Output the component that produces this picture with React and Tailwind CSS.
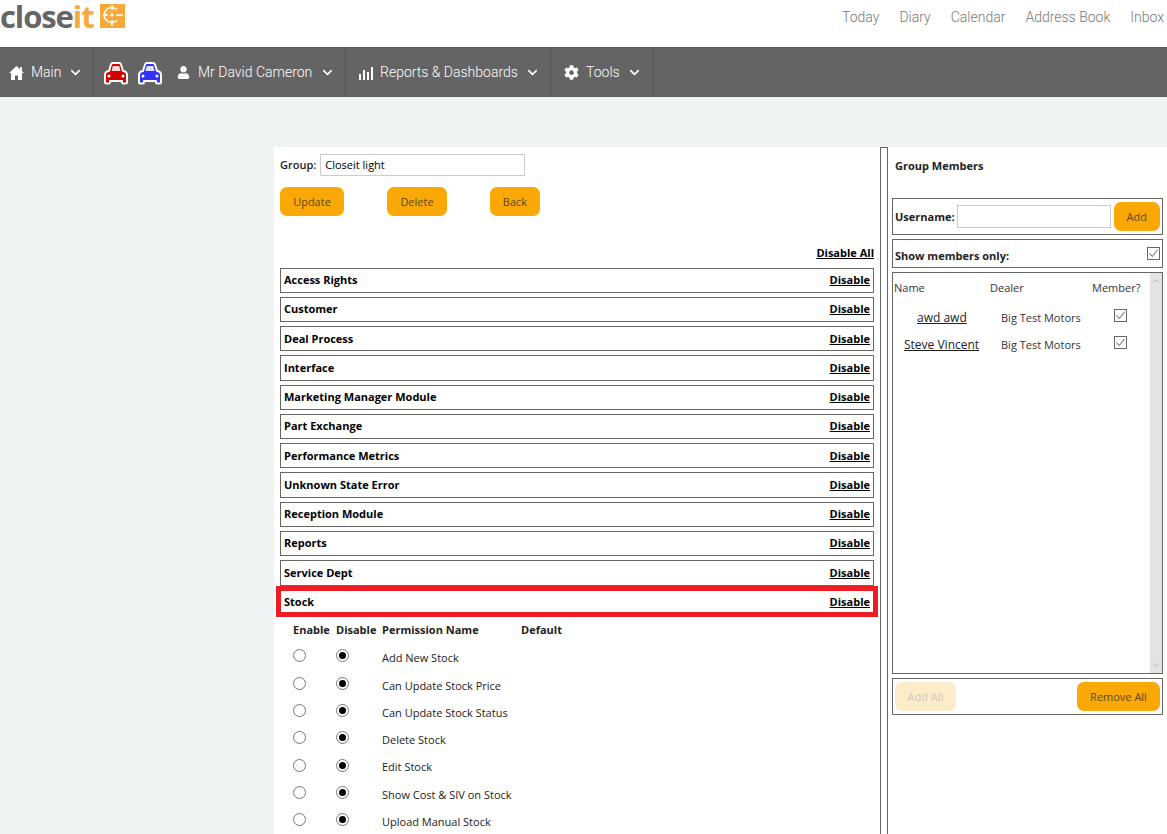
import { ChevronDown, ChevronUp } from "lucide-react";
import { FaUser, FaCog } from "react-icons/fa";

const topLinks = ["Today", "Diary", "Calendar", "Address Book", "Inbox"];
const sections = [
  "Access Rights",
  "Customer",
  "Deal Process",
  "Interface",
  "Marketing Manager Module",
  "Part Exchange",
  "Performance Metrics",
  "Unknown State Error",
  "Reception Module",
  "Reports",
  "Service Dept",
];
const permissions = [
  "Add New Stock",
  "Can Update Stock Price",
  "Can Update Stock Status",
  "Delete Stock",
  "Edit Stock",
  "Show Cost & SIV on Stock",
  "Upload Manual Stock",
];
const members = [
  { name: "awd awd", pad: "pl-[24px] w-[108px]" },
  { name: "Steve Vincent", pad: "pl-[11px] w-[108px]" },
];

function Car({ color }) {
  return (
    <svg width="26" height="24" viewBox="0 0 26 24" aria-hidden="true">
      <path
        d="M6 10 L8 3.5 Q8.5 2 10 2 H16 Q17.500 2 18 3.500 L20 10 Q24 10.500 24 14 V21 Q24 22.500 22.500 22.500 H20.500 Q19 22.500 19 21 V20 H7 V21 Q7 22.500 5.500 22.500 H3.500 Q2 22.500 2 21 V14 Q2 10.500 6 10 Z"
        fill={color}
        stroke="#fff"
        strokeWidth="2"
        strokeLinejoin="round"
      />
      <path d="M8.500 10 L9.800 5 H16.200 L17.500 10 Z" fill="#fff" opacity="0.85" />
      <circle cx="6" cy="15" r="1.500" fill="#fff" />
      <circle cx="20" cy="15" r="1.500" fill="#fff" />
    </svg>
  );
}

function HomeIcon() {
  return (
    <svg width="15" height="14" viewBox="0 0 15 14" fill="#fff" aria-hidden="true">
      <path d="M7.500 0 L15 7 H13 V14 H9 V9.500 H6 V14 H2 V7 H0 Z" />
      <rect x="11" y="1" width="2" height="4" />
    </svg>
  );
}

function BarsIcon() {
  return (
    <svg width="14" height="14" viewBox="0 0 14 14" fill="#fff" aria-hidden="true">
      <rect x="0" y="8" width="2" height="6" />
      <rect x="4" y="4" width="2" height="10" />
      <rect x="8" y="6" width="2" height="8" />
      <rect x="12" y="1" width="2" height="13" />
    </svg>
  );
}

function NavLabel({ icon, label, gap = "gap-[7px]" }) {
  return (
    <span className={`flex items-center whitespace-nowrap ${gap}`}>
      {icon}
      <span>{label}</span>
      <ChevronDown size={15} strokeWidth={2.5} className="text-white" />
    </span>
  );
}

function Button({ children, className = "" }) {
  return (
    <button
      type="button"
      className={`h-[29px] rounded-[7px] bg-[#f9a806] pt-px text-[11px] text-[#5b4a1c] ${className}`}
    >
      {children}
    </button>
  );
}

function Radio({ checked }) {
  return (
    <span className="flex size-[13px] items-center justify-center rounded-full border border-[#767676] bg-white">
      {checked && <span className="size-[7px] rounded-full bg-black" />}
    </span>
  );
}

function Tick() {
  return (
    <span className="flex size-[13px] items-center justify-center border border-[#666] bg-white">
      <svg width="11" height="11" viewBox="0 0 11 11" fill="none" stroke="#444" strokeWidth="0.9" aria-hidden="true">
        <path d="M1.500 5.500 L4.300 8.500 L9.500 1.800" />
      </svg>
    </span>
  );
}

function SectionRow({ title, className = "border border-[#666] h-[25.27px] mb-1 px-[3px]" }) {
  return (
    <div className={`flex items-center justify-between text-[11px] font-bold text-black ${className}`}>
      <span>{title}</span>
      <a className="underline">Disable</a>
    </div>
  );
}

export default function App() {
  return (
    <div className="flex h-[834px] flex-col overflow-hidden bg-[#eff3f4] font-['Open_Sans',sans-serif]">
      <header className="flex h-[47px] shrink-0 items-start justify-between bg-white">
        <div className="flex items-start">
          <span className="text-[31px] font-bold leading-[33px] tracking-[-1.1px] text-[#666]">
            close<span className="text-[#f9a83a]">it</span>
          </span>
          <span className="ml-[6px] mt-[4px] flex h-[24px] w-[25px] items-center justify-center bg-[#f9a83a]">
            <svg width="25" height="24" viewBox="0 0 25 24" fill="none" stroke="#fff" strokeWidth="1.500" aria-hidden="true">
              <path d="M17 5.800 A7.500 7.500 0 1 0 17 16.200" />
              <circle cx="12" cy="11" r="1.700" fill="#fff" stroke="none" />
              <path d="M12 1 V6 M12 16 V22 M3 11 H8 M16 11 H23" />
            </svg>
          </span>
        </div>
        <nav className="flex gap-[20px] pr-[3px] pt-[7px] font-['Roboto',sans-serif] text-[14px] font-light text-[#777]">
          {topLinks.map((link) => (
            <a key={link}>{link}</a>
          ))}
        </nav>
      </header>

      <nav className="flex h-[50px] shrink-0 items-stretch border-t border-[#5c5c5c] bg-[#646464] font-['Roboto',sans-serif] text-[14px] font-light text-white">
        <div className="flex w-[94px] items-center border-r border-[#565656] pl-[9px]">
          <NavLabel icon={<HomeIcon />} label="Main" />
        </div>
        <div className="flex w-[252px] items-center border-r border-[#565656] pl-[9px]">
          <Car color="#cf0000" />
          <span className="ml-[8px]"><Car color="#3232ff" /></span>
          <span className="ml-[14px]">
            <NavLabel icon={<FaUser size={13} />} label="Mr David Cameron" gap="gap-[8px]" />
          </span>
        </div>
        <div className="flex w-[205px] items-center border-r border-[#565656] pl-[13px]">
          <NavLabel icon={<BarsIcon />} label="Reports & Dashboards" />
        </div>
        <div className="flex w-[103px] items-center border-r border-[#565656] pl-[13px]">
          <NavLabel icon={<FaCog size={15} />} label="Tools" />
        </div>
      </nav>

      <main className="mt-[50px] flex min-h-0 flex-1 pl-[274px]">
        <section className="w-[606px] bg-white px-[6px]">
          <div className="flex items-center pt-[7px] text-[11px] text-black">
            <label className="font-semibold text-[#222]">Group:</label>
            <input
              readOnly
              value="Closeit light"
              className="ml-[4px] h-[22px] w-[205px] border border-[#ccc] px-[4px] pb-px text-[11px] text-black outline-none"
            />
          </div>
          <div className="mt-[11px] flex">
            <Button className="w-[64px]">Update</Button>
            <Button className="ml-[43px] w-[60px]">Delete</Button>
            <Button className="ml-[43px] w-[50px]">Back</Button>
          </div>
          <div className="mt-[29.600px] h-[22px] text-right text-[11px] leading-[14px] font-bold text-black">
            <a className="underline">Disable All</a>
          </div>
          {sections.map((title) => (
            <SectionRow key={title} title={title} />
          ))}
          <div className="-mx-[4px] -mt-[3.200px] mb-[5px] h-[31px]">
            <SectionRow title="Stock" className="h-full border-[5px] border-[#ee1c25] pl-[3px] pr-[3px]" />
          </div>
          <div className="grid grid-cols-[43px_46px_139px_1fr] pl-[13px] text-[11px] font-bold leading-[16px] text-[#222]">
            <span>Enable</span>
            <span>Disable</span>
            <span>Permission Name</span>
            <span>Default</span>
          </div>
          <div className="mt-[4px]">
            {permissions.map((permission) => (
              <div key={permission} className="grid h-[27.300px] grid-cols-[43px_46px_1fr] items-center pl-[13px] text-[11px] text-[#222]">
                <Radio />
                <span><Radio checked /></span>
                <span className="pt-[5px]">{permission}</span>
              </div>
            ))}
          </div>
        </section>

        <div className="h-full w-[8px] border-x border-t border-[#666] bg-white" />

        <aside className="flex-1 bg-white px-[4px]">
          <h2 className="pl-[3px] pt-[11px] text-[11px] leading-[16px] font-bold text-[#222]">Group Members</h2>
          <div className="mt-[24px] flex h-[37px] items-center border border-[#666] px-[2px] text-[11px] font-bold text-[#222]">
            <span className="pt-[2px]">Username:</span>
            <input readOnly className="ml-[2px] h-[23px] w-[154px] border border-[#ccc] outline-none" />
            <Button className="ml-[3px] flex-1 font-normal">Add</Button>
          </div>
          <div className="mt-[4px] flex h-[29px] items-center justify-between border border-[#666] px-[2px] text-[11px] font-bold text-[#222]">
            <span className="pt-[5px]">Show members only:</span>
            <Tick />
          </div>
          <div className="mt-[4px] flex h-[402px] border border-[#666] text-[11px] text-[#333]">
            <div className="min-w-0 flex-1">
              <div className="grid grid-cols-[96px_102px_1fr] pl-px pt-[7px] leading-[16px]">
                <span>Name</span>
                <span>Dealer</span>
                <span>Member?</span>
              </div>
              <div className="mt-[8px]">
                {members.map((member) => (
                  <div key={member.name} className="flex h-[27.500px] items-center">
                    <a className={`${member.pad} text-[12px] text-[#222] underline`}>{member.name}</a>
                    <span className="w-[113px]">Big Test Motors</span>
                    <span className="-mt-[5px]"><Tick /></span>
                  </div>
                ))}
              </div>
            </div>
            <div className="flex w-[12px] flex-col items-center justify-between bg-[#e3e3e3] py-[3px] text-[#aaa]">
              <ChevronUp size={10} />
              <ChevronDown size={10} />
            </div>
          </div>
          <div className="mt-[4px] flex h-[37px] items-center justify-between border border-[#666] px-[2px]">
            <Button className="w-[61px] !bg-[#fdecc8] !text-[#cfc9bb]">Add All</Button>
            <Button className="w-[83px] text-[#3e3315]">Remove All</Button>
          </div>
        </aside>
      </main>
    </div>
  );
}
